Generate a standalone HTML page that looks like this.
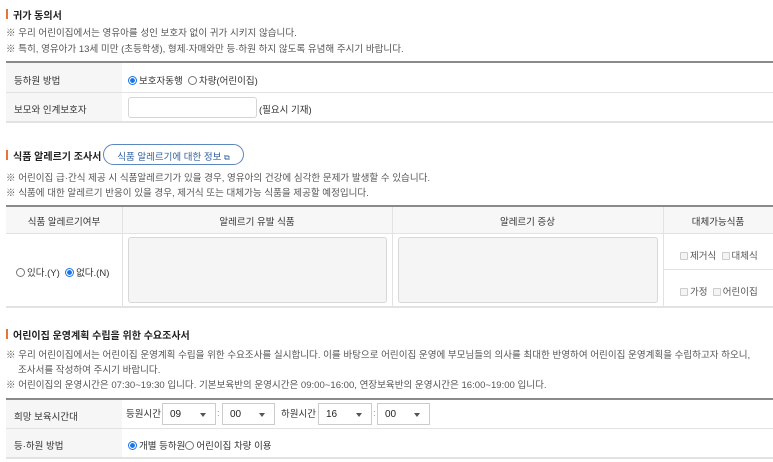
<!DOCTYPE html>
<html><head><meta charset="utf-8">
<style>
*{margin:0;padding:0;box-sizing:border-box}
body{width:773px;height:462px;background:#fff;position:relative;overflow:hidden;font-family:"Liberation Sans","Noto Sans CJK KR",sans-serif;color:#333;font-size:9.5px}
.a{position:absolute;white-space:nowrap}
.t{font-size:10px;font-weight:bold;color:#222}
.bar{position:absolute;width:2px;height:10px;background:#e8743b}
.n{color:#555;font-size:9.55px}
.hl{position:absolute;left:6px;right:0;height:2px;background:#8a8a8a}
.ln{position:absolute;left:6px;right:0;height:1px;background:#e2e2e2}
.lb{position:absolute;left:6px;width:116px;background:#f6f6f6}
.lab{font-size:9.5px;color:#333}
.rad{display:inline-block;width:9px;height:9px;border:1px solid #777;border-radius:50%;vertical-align:-1px;margin-right:2px;background:#fff}
.rad.on{border-color:#1a73e8;background:radial-gradient(circle,#1a73e8 0 2.2px,#fff 2.6px)}
.cb{display:inline-block;width:8px;height:8px;border:1px solid #ccc;border-radius:1px;vertical-align:-1px;margin-right:2px;background:#f4f4f4}
.box{position:absolute;border:1px solid #d5d5d5;border-radius:3px;background:#fff}
.ta{position:absolute;border:1px solid #d8d8d8;border-radius:3px;background:#f5f5f5}
.sel{position:absolute;height:22px;border:1px solid #ccc;background:#fff;font-size:10px;padding:5px 0 0 7px;color:#222}
.sel:after{content:"";position:absolute;right:9px;top:9px;border-left:3px solid transparent;border-right:3px solid transparent;border-top:4px solid #555}
.vl{position:absolute;width:1px;background:#e2e2e2}
</style></head><body>

<div class="bar" style="left:6px;top:9px"></div>
<div class="a t" style="left:13px;top:7px">귀가 동의서</div>
<div class="a n" style="left:6px;top:25px">※ 우리 어린이집에서는 영유아를 성인 보호자 없이 귀가 시키지 않습니다.</div>
<div class="a n" style="left:6px;top:41px">※ 특히, 영유아가 13세 미만 (초등학생), 형제·자매와만 등·하원 하지 않도록 유념해 주시기 바랍니다.</div>

<div class="lb" style="top:63px;height:59px"></div>
<div class="hl" style="top:61px"></div>
<div class="ln" style="top:92px"></div>
<div class="ln" style="top:121px;height:2px"></div>
<div class="a lab" style="left:14px;top:73px">등하원 방법</div>
<div class="a lab" style="left:128px;top:73px"><span class="rad on"></span>보호자동행 &nbsp;<span class="rad"></span>차량(어린이집)</div>
<div class="a lab" style="left:14px;top:102px">보모와 인계보호자</div>
<div class="box" style="left:128px;top:97px;width:129px;height:21px"></div>
<div class="a lab" style="left:259px;top:102px">(필요시 기재)</div>

<div class="bar" style="left:6px;top:150px"></div>
<div class="a t" style="left:13px;top:148px">식품 알레르기 조사서</div>
<div class="a" style="left:103px;top:144px;width:141px;height:21px;border:1px solid #5b86c0;border-radius:11px;color:#2f5f9e;font-size:9.5px;text-align:center;padding-top:4px">식품 알레르기에 대한 정보 <span style="font-size:8px">⧉</span></div>
<div class="a n" style="left:6px;top:170px">※ 어린이집 급·간식 제공 시 식품알레르기가 있을 경우, 영유아의 건강에 심각한 문제가 발생할 수 있습니다.</div>
<div class="a n" style="left:6px;top:185px">※ 식품에 대한 알레르기 반응이 있을 경우, 제거식 또는 대체가능 식품을 제공할 예정입니다.</div>

<div style="position:absolute;left:6px;right:0;top:206px;height:27px;background:#f7f7f7"></div>
<div class="hl" style="top:205px"></div>
<div class="ln" style="top:233px"></div>
<div class="ln" style="top:306px;height:2px"></div>
<div class="vl" style="left:122px;top:207px;height:100px"></div>
<div class="vl" style="left:392px;top:207px;height:100px"></div>
<div class="vl" style="left:663px;top:207px;height:100px"></div>
<div style="position:absolute;left:663px;right:0;top:269px;height:1px;background:#e2e2e2"></div>
<div class="a lab" style="left:6px;width:116px;text-align:center;top:214px">식품 알레르기여부</div>
<div class="a lab" style="left:122px;width:270px;text-align:center;top:214px">알레르기 유발 식품</div>
<div class="a lab" style="left:392px;width:271px;text-align:center;top:214px">알레르기 증상</div>
<div class="a lab" style="left:663px;width:110px;text-align:center;top:214px">대체가능식품</div>
<div class="a lab" style="left:16px;top:265px"><span class="rad"></span>있다.(Y) &nbsp;<span class="rad on"></span>없다.(N)</div>
<div class="ta" style="left:128px;top:237px;width:259px;height:66px"></div>
<div class="ta" style="left:398px;top:237px;width:260px;height:66px"></div>
<div class="a lab" style="left:680px;top:248px;color:#555"><span class="cb"></span>제거식 &nbsp;<span class="cb"></span>대체식</div>
<div class="a lab" style="left:680px;top:284px;color:#555"><span class="cb"></span>가정 &nbsp;<span class="cb"></span>어린이집</div>

<div class="bar" style="left:6px;top:329px"></div>
<div class="a t" style="left:13px;top:327px">어린이집 운영계획 수립을 위한 수요조사서</div>
<div class="a n" style="left:6px;top:347px">※ 우리 어린이집에서는 어린이집 운영계획 수립을 위한 수요조사를 실시합니다. 이를 바탕으로 어린이집 운영에 부모님들의 의사를 최대한 반영하여 어린이집 운영계획을 수립하고자 하오니,</div>
<div class="a n" style="left:18px;top:362px">조사서를 작성하여 주시기 바랍니다.</div>
<div class="a n" style="left:6px;top:377px">※ 어린이집의 운영시간은 07:30~19:30 입니다. 기본보육반의 운영시간은 09:00~16:00, 연장보육반의 운영시간은 16:00~19:00 입니다.</div>

<div class="lb" style="top:400px;height:58px"></div>
<div class="hl" style="top:398px"></div>
<div class="ln" style="top:428px"></div>
<div class="ln" style="top:457px;height:2px"></div>
<div class="a lab" style="left:14px;top:409px">희망 보육시간대</div>
<div class="a lab" style="left:126px;top:406px">등원시간</div>
<div class="sel" style="left:162px;top:403px;width:54px">09</div>
<div class="a lab" style="left:217px;top:408px;color:#999">:</div>
<div class="sel" style="left:222px;top:403px;width:53px">00</div>
<div class="a lab" style="left:281px;top:406px">하원시간</div>
<div class="sel" style="left:318px;top:403px;width:54px">16</div>
<div class="a lab" style="left:373px;top:408px;color:#999">:</div>
<div class="sel" style="left:377px;top:403px;width:53px">00</div>
<div class="a lab" style="left:14px;top:438px">등·하원 방법</div>
<div class="a lab" style="left:128px;top:438px"><span class="rad on"></span>개별 등하원<span class="rad"></span>어린이집 차량 이용</div>
</body></html>
